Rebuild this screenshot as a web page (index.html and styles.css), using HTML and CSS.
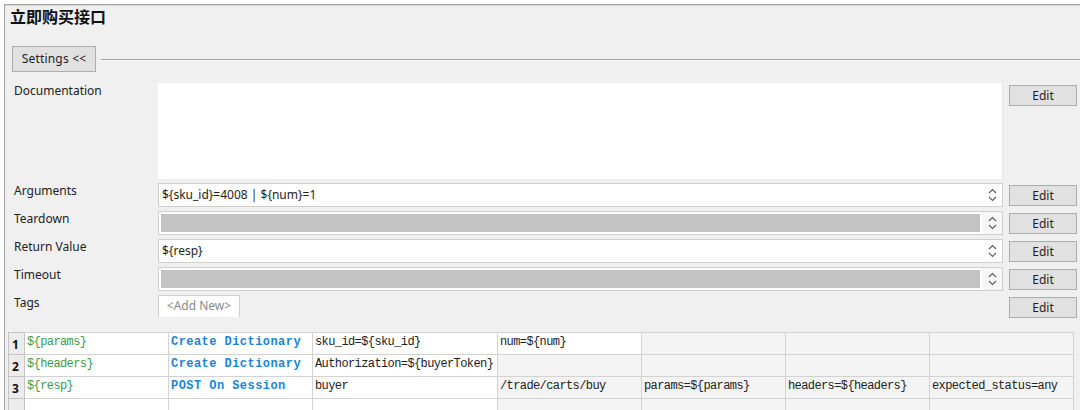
FILE: index.html
```html
<!DOCTYPE html>
<html>
<head>
<meta charset="utf-8">
<link rel="stylesheet" href="styles.css">
</head>
<body>
<div class="frame">
  <div class="title">立即购买接口</div>
  <div class="settings-row">
    <div class="btn settings-btn">Settings &lt;&lt;</div>
    <div class="rule"></div>
  </div>
  <div class="form">
    <div class="label">Documentation</div>
    <div class="doc"></div>
    <div class="btn edit">Edit</div>

    <div class="label">Arguments</div>
    <div class="input"><div class="value">${sku_id}=4008 | ${num}=1</div><div class="spin"><svg width="9" height="16" viewBox="0 0 9 16"><path d="M1 6 L4.5 2.5 L8 6" /><path d="M1 10 L4.5 13.5 L8 10" /></svg></div></div>
    <div class="btn edit">Edit</div>

    <div class="label">Teardown</div>
    <div class="input disabled"><div class="value"></div><div class="spin"><svg width="9" height="16" viewBox="0 0 9 16"><path d="M1 6 L4.5 2.5 L8 6" /><path d="M1 10 L4.5 13.5 L8 10" /></svg></div></div>
    <div class="btn edit">Edit</div>

    <div class="label">Return Value</div>
    <div class="input"><div class="value">${resp}</div><div class="spin"><svg width="9" height="16" viewBox="0 0 9 16"><path d="M1 6 L4.5 2.5 L8 6" /><path d="M1 10 L4.5 13.5 L8 10" /></svg></div></div>
    <div class="btn edit">Edit</div>

    <div class="label">Timeout</div>
    <div class="input disabled"><div class="value"></div><div class="spin"><svg width="9" height="16" viewBox="0 0 9 16"><path d="M1 6 L4.5 2.5 L8 6" /><path d="M1 10 L4.5 13.5 L8 10" /></svg></div></div>
    <div class="btn edit">Edit</div>

    <div class="label">Tags</div>
    <div class="tags"><div class="tag-new">&lt;Add New&gt;</div></div>
    <div class="btn edit">Edit</div>
  </div>
  <table class="grid">
    <colgroup>
      <col class="c-num"><col class="c-w"><col class="c-w"><col class="c-wide"><col class="c-w"><col class="c-w"><col class="c-w"><col class="c-w">
    </colgroup>
    <tr>
      <td class="num">1</td>
      <td class="var">${params}</td>
      <td class="kw">Create Dictionary</td>
      <td class="arg">sku_id=${sku_id}</td>
      <td class="arg">num=${num}</td>
      <td class="empty"></td><td class="empty"></td><td class="empty"></td>
    </tr>
    <tr>
      <td class="num">2</td>
      <td class="var">${headers}</td>
      <td class="kw">Create Dictionary</td>
      <td class="arg">Authorization=${buyerToken}</td>
      <td class="empty"></td><td class="empty"></td><td class="empty"></td><td class="empty"></td>
    </tr>
    <tr>
      <td class="num">3</td>
      <td class="var">${resp}</td>
      <td class="kw">POST On Session</td>
      <td class="arg">buyer</td>
      <td class="arg gray">/trade/carts/buy</td>
      <td class="arg gray">params=${params}</td>
      <td class="arg gray">headers=${headers}</td>
      <td class="arg gray">expected_status=any</td>
    </tr>
    <tr>
      <td class="num"></td>
      <td class="var"></td><td class="arg"></td><td class="arg"></td>
      <td class="empty"></td><td class="empty"></td><td class="empty"></td><td class="empty"></td>
    </tr>
  </table>
</div>
</body>
</html>
```

FILE: styles.css
```css
html, body {
  margin: 0;
  padding: 0;
  background: #ffffff;
}
body {
  width: 1080px;
  height: 410px;
  overflow: hidden;
  font-family: "Noto Sans", "Open Sans", sans-serif;
  font-size: 12px;
  color: #1e1e1e;
}
.frame {
  margin: 4px 0 0 4px;
  height: 406px;
  overflow: hidden;
  background: #f0f0f0;
  border-top: 1px solid #a6a6a6;
  border-left: 1px solid #a6a6a6;
  box-shadow: inset 0 1px 0 #d4d4d4;
  box-sizing: border-box;
}
.title {
  font-family: "Noto Sans CJK SC", sans-serif;
  font-weight: bold;
  font-size: 16px;
  line-height: 22px;
  height: 22px;
  padding-left: 5px;
  color: #111;
}
.settings-row {
  display: flex;
  align-items: center;
  margin-top: 19px;
  padding-left: 7px;
}
.btn {
  background: #e1e1e1;
  border: 1px solid #adadad;
  box-sizing: border-box;
  text-align: center;
  color: #1e1e1e;
}
.settings-btn {
  width: 84px;
  height: 26px;
  line-height: 24px;
  font-size: 12px;
  letter-spacing: 0.2px;
}
.rule {
  flex: 1;
  height: 1px;
  margin-left: 5px;
  background: #a0a0a0;
  box-shadow: 0 1px 0 #ffffff;
}
.form {
  display: grid;
  grid-template-columns: 138px 845px 68px;
  column-gap: 6px;
  row-gap: 4px;
  margin-top: 11px;
  padding-left: 9px;
  align-items: start;
}
.label {
  line-height: 16px;
  color: #222;
}
.doc {
  height: 96px;
  background: #ffffff;
  border-right: 1px solid #e6e6e6;
  box-sizing: border-box;
}
.edit {
  height: 21px;
  line-height: 19px;
  margin-top: 2px;
}
.input {
  height: 24px;
  display: flex;
  border: 1px solid #cfcfcf;
  background: #ffffff;
  box-sizing: border-box;
}
.input .value {
  flex: 1;
  padding-left: 3px;
  line-height: 22px;
  color: #1e1e1e;
}
.input.disabled .value {
  margin: 2px;
  background: #c3c3c3;
}
.spin {
  width: 20px;
  display: flex;
  align-items: center;
  justify-content: center;
  background: #ffffff;
}
.input.disabled .spin {
  background: #f7f7f7;
}
.spin svg path {
  fill: none;
  stroke: #5a5a5a;
  stroke-width: 1.1;
}
.tags {
  height: 22px;
}
.tag-new {
  display: inline-block;
  width: 82px;
  height: 22px;
  line-height: 20px;
  box-sizing: border-box;
  border: 1px solid #cfcfcf;
  border-bottom: none;
  background: #ffffff;
  color: #8a8a8a;
  text-align: center;
}
.grid {
  margin-top: 14px;
  margin-left: 3px;
  border-collapse: collapse;
  table-layout: fixed;
  font-family: "Liberation Mono", monospace;
  font-size: 12px;
  letter-spacing: -0.6px;
}
.c-num { width: 16px; }
.c-w { width: 144px; }
.c-wide { width: 185px; }
.grid td {
  height: 20px;
  padding: 1px 2px 0 2px;
  border: 1px solid #d3d3d3;
  vertical-align: top;
  line-height: 16px;
  white-space: nowrap;
  overflow: hidden;
  background: #ffffff;
  color: #222;
}
.grid td.num {
  height: 17px;
  background: #ececec;
  border-color: #c4c4c4;
  font-family: "Noto Sans", sans-serif;
  font-weight: bold;
  font-size: 12px;
  letter-spacing: 0;
  padding: 4px 0 0 3px;
  color: #111;
}
.grid td.var {
  color: #3b9c48;
}
.grid td.kw {
  color: #1a85d6;
  font-weight: bold;
  letter-spacing: 0.45px;
}
.grid td.empty,
.grid td.gray {
  background: #f4f4f4;
}
```
